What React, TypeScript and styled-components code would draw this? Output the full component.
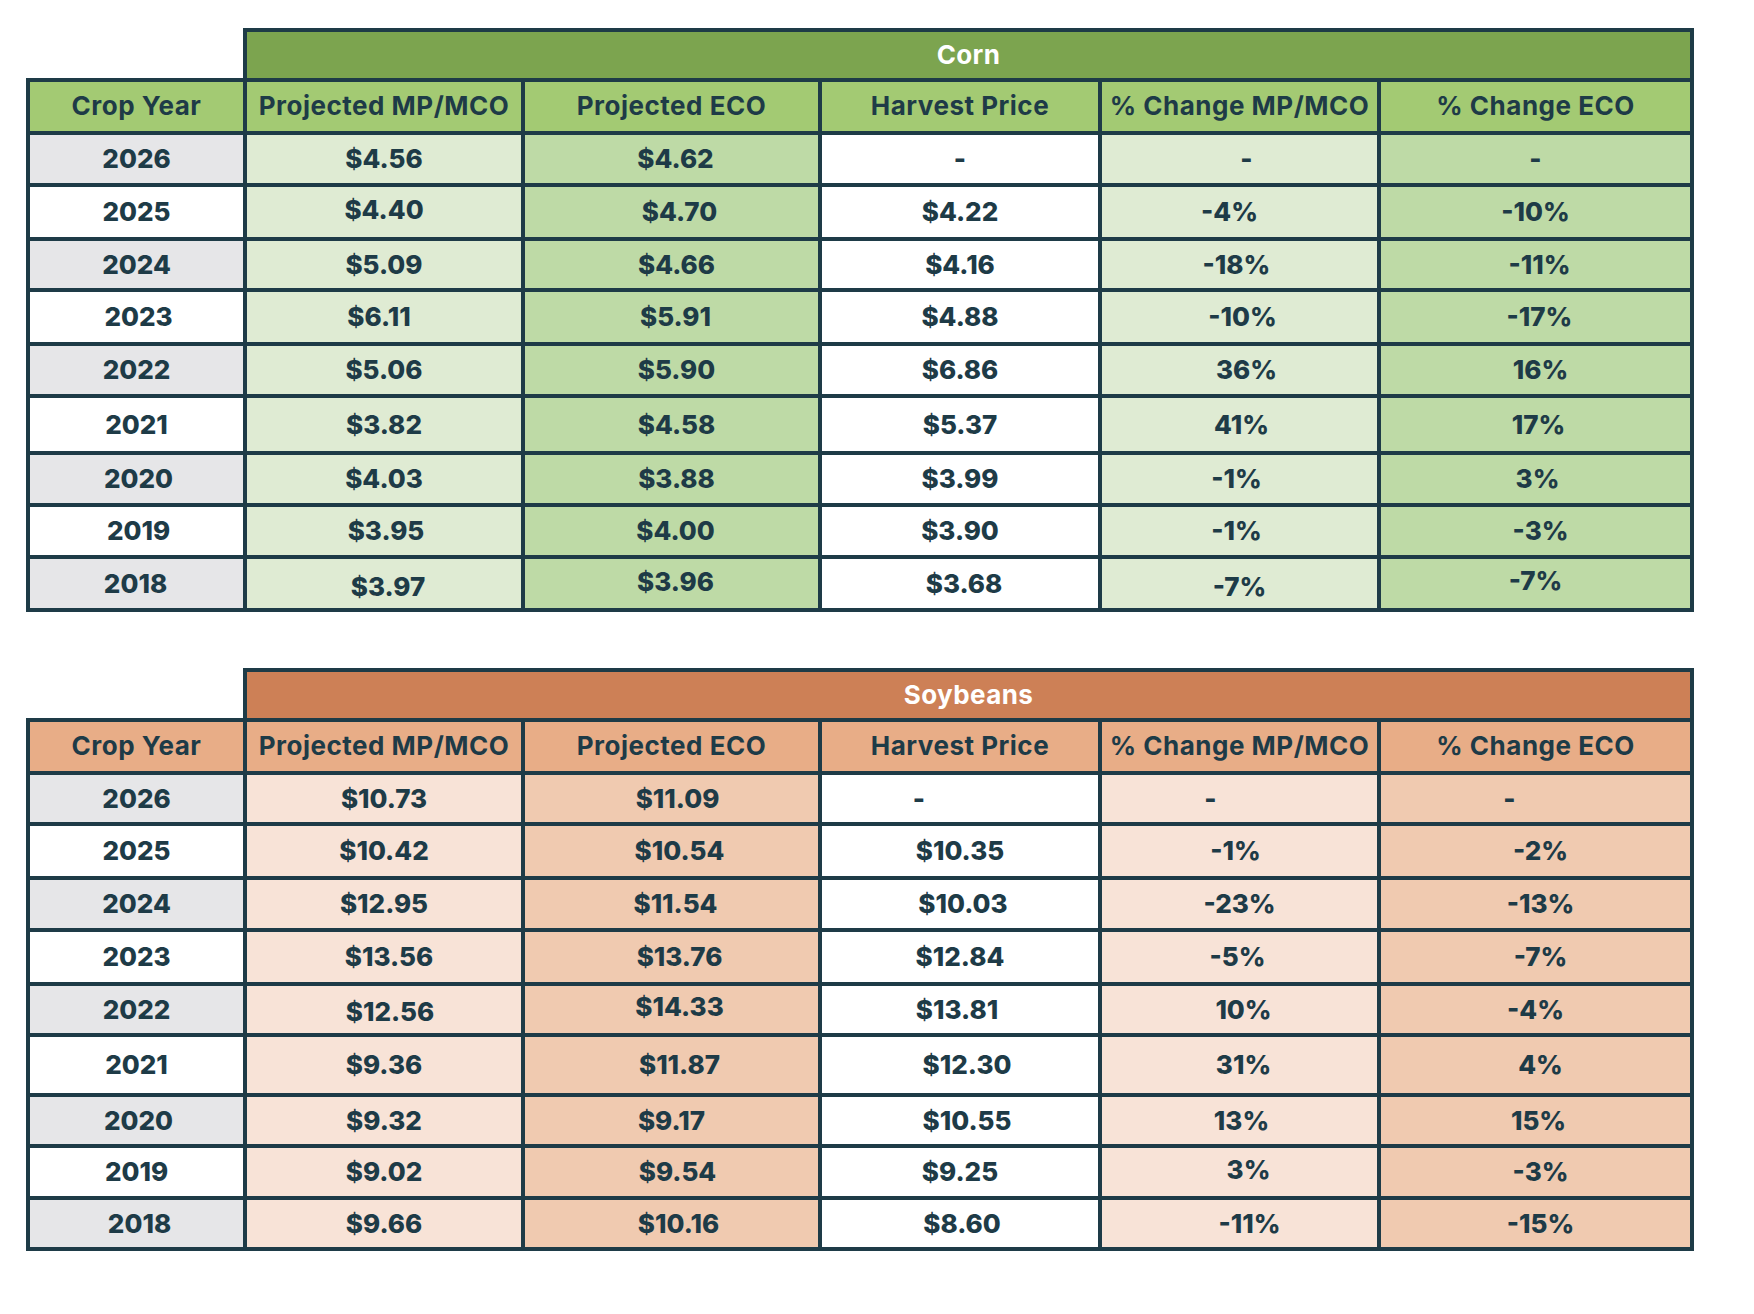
import React from 'react';
import styled, { createGlobalStyle } from 'styled-components';

const GlobalStyle = createGlobalStyle`
  html, body {
    margin: 0;
    padding: 0;
    background: #ffffff;
  }
  body {
    font-family: Inter, Lato, "Open Sans", sans-serif;
    color: #1e3b47;
  }
`;

const INK = '#1e3b47';
const COLS = '213px 274px 293px 276px 275px 309px';

type Palette = {
  band: string;
  head: string;
  light: string;
  mid: string;
};

const corn: Palette = {
  band: '#7ca44f',
  head: '#a3ca73',
  light: '#dfebd3',
  mid: '#bedaa6',
};

const soy: Palette = {
  band: '#cd8056',
  head: '#e8ad87',
  light: '#f8e3d7',
  mid: '#f0cab0',
};

const Page = styled.div`
  padding: 28px 0 0 26px;
  display: flex;
  flex-direction: column;
  gap: 56px;
  width: 1668px;
`;

const Block = styled.section`
  display: flex;
  flex-direction: column;
`;

const BandRow = styled.div`
  display: flex;
  justify-content: flex-end;
`;

const Band = styled.div<{ bg: string }>`
  width: 1443px;
  height: 46px;
  border: 4px solid ${INK};
  border-bottom: none;
  background: ${(p) => p.bg};
  color: #ffffff;
  font-weight: 700;
  font-size: 26px;
  letter-spacing: 0.4px;
  line-height: 1;
  display: flex;
  align-items: center;
  justify-content: center;
  box-sizing: content-box;
`;

const Grid = styled.div<{ rows: string }>`
  display: grid;
  grid-template-columns: ${COLS};
  grid-template-rows: ${(p) => p.rows};
  gap: 4px;
  padding: 4px;
  background: ${INK};
`;

const HeadCell = styled.div<{ bg: string }>`
  background: ${(p) => p.bg};
  display: flex;
  align-items: center;
  justify-content: center;
  font-weight: 700;
  font-size: 26px;
  letter-spacing: 0.5px;
  line-height: 1;
  white-space: nowrap;
  padding-bottom: 2px;
`;

// dx / dy nudge the figure off-centre the way the source sheet does
const Cell = styled.div<{ bg: string; dx?: number; dy?: number }>`
  background: ${(p) => p.bg};
  display: flex;
  align-items: center;
  justify-content: center;
  font-weight: 800;
  font-size: 26px;
  line-height: 1;
  white-space: nowrap;
  padding-left: ${(p) => Math.max(0, (p.dx || 0) * 2)}px;
  padding-right: ${(p) => Math.max(0, -(p.dx || 0) * 2)}px;
  padding-top: ${(p) => Math.max(0, (p.dy || 0) * 2)}px;
  padding-bottom: ${(p) => Math.max(0, -(p.dy || 0) * 2)}px;
`;

type Row = {
  year: string;
  values: string[];
  height: number;
  shift?: Record<number, [number, number]>;
};

type TableProps = {
  title: string;
  palette: Palette;
  rows: Row[];
};

const headers = [
  'Crop Year',
  'Projected MP/MCO',
  'Projected ECO',
  'Harvest Price',
  '% Change MP/MCO',
  '% Change ECO',
];

const CropTable: React.FC<TableProps> = ({ title, palette, rows }) => {
  const colBg = [palette.light, palette.mid, '#ffffff', palette.light, palette.mid];
  const template = ['49px', ...rows.map((r) => `${r.height}px`)].join(' ');
  return (
    <Block>
      <BandRow>
        <Band bg={palette.band}>{title}</Band>
      </BandRow>
      <Grid rows={template}>
        {headers.map((h) => (
          <HeadCell key={h} bg={palette.head}>
            {h}
          </HeadCell>
        ))}
        {rows.map((r, i) => {
          const s = r.shift || {};
          return (
            <React.Fragment key={r.year}>
              <Cell
                bg={i % 2 === 0 ? '#e6e6e8' : '#ffffff'}
                dx={s[0]?.[0]}
                dy={s[0]?.[1]}
              >
                {r.year}
              </Cell>
              {r.values.map((v, j) => (
                <Cell key={j} bg={colBg[j]} dx={s[j + 1]?.[0]} dy={s[j + 1]?.[1]}>
                  {v}
                </Cell>
              ))}
            </React.Fragment>
          );
        })}
      </Grid>
    </Block>
  );
};

const cornRows: Row[] = [
  {
    year: '2026',
    values: ['$4.56', '$4.62', '-', '-', '-'],
    height: 48,
    shift: { 2: [4, 0], 4: [7, 0] },
  },
  {
    year: '2025',
    values: ['$4.40', '$4.70', '$4.22', '-4%', '-10%'],
    height: 50,
    shift: { 1: [0, -2], 2: [8, 0], 4: [-10, 0] },
  },
  {
    year: '2024',
    values: ['$5.09', '$4.66', '$4.16', '-18%', '-11%'],
    height: 47,
    shift: { 2: [5, 0], 4: [-3, 0], 5: [4, 0] },
  },
  {
    year: '2023',
    values: ['$6.11', '$5.91', '$4.88', '-10%', '-17%'],
    height: 50,
    shift: { 0: [2, 0], 1: [-5, 0], 2: [4, 0], 4: [3, 0], 5: [4, 0] },
  },
  {
    year: '2022',
    values: ['$5.06', '$5.90', '$6.86', '36%', '16%'],
    height: 48,
    shift: { 2: [5, 0], 4: [7, 0], 5: [5, 0] },
  },
  {
    year: '2021',
    values: ['$3.82', '$4.58', '$5.37', '41%', '17%'],
    height: 53,
    shift: { 2: [5, 0], 4: [2, 0], 5: [3, 0] },
  },
  {
    year: '2020',
    values: ['$4.03', '$3.88', '$3.99', '-1%', '3%'],
    height: 48,
    shift: { 0: [2, 0], 2: [5, 0], 4: [-3, 0], 5: [2, 0] },
  },
  {
    year: '2019',
    values: ['$3.95', '$4.00', '$3.90', '-1%', '-3%'],
    height: 48,
    shift: { 0: [2, 0], 1: [2, 0], 2: [4, 0], 4: [-3, 0], 5: [5, 0] },
  },
  {
    year: '2018',
    values: ['$3.97', '$3.96', '$3.68', '-7%', '-7%'],
    height: 49,
    shift: { 0: [-1, 0], 1: [4, 3], 2: [4, -2], 3: [4, 0], 4: [0, 3], 5: [0, -3] },
  },
];

const soyRows: Row[] = [
  {
    year: '2026',
    values: ['$10.73', '$11.09', '-', '-', '-'],
    height: 47,
    shift: { 2: [6, 0], 3: [-41, 0], 4: [-29, 0], 5: [-26, 0] },
  },
  {
    year: '2025',
    values: ['$10.42', '$10.54', '$10.35', '-1%', '-2%'],
    height: 50,
    shift: { 2: [8, 0], 4: [-4, 0], 5: [5, 0] },
  },
  {
    year: '2024',
    values: ['$12.95', '$11.54', '$10.03', '-23%', '-13%'],
    height: 48,
    shift: { 2: [4, 0], 3: [3, 0], 5: [5, 0] },
  },
  {
    year: '2023',
    values: ['$13.56', '$13.76', '$12.84', '-5%', '-7%'],
    height: 50,
    shift: { 1: [5, 0], 2: [8, 0], 4: [-2, 0], 5: [5, 0] },
  },
  {
    year: '2022',
    values: ['$12.56', '$14.33', '$13.81', '10%', '-4%'],
    height: 47,
    shift: { 1: [6, 2], 2: [8, -3], 3: [-3, 0], 4: [4, 0] },
  },
  {
    year: '2021',
    values: ['$9.36', '$11.87', '$12.30', '31%', '4%'],
    height: 56,
    shift: { 2: [8, 0], 3: [7, 0], 4: [4, 0], 5: [5, 0] },
  },
  {
    year: '2020',
    values: ['$9.32', '$9.17', '$10.55', '13%', '15%'],
    height: 47,
    shift: { 0: [2, 0], 3: [7, 0], 4: [2, 0], 5: [3, 0] },
  },
  {
    year: '2019',
    values: ['$9.02', '$9.54', '$9.25', '3%', '-3%'],
    height: 48,
    shift: { 2: [6, 0], 4: [9, -2], 5: [5, 0] },
  },
  {
    year: '2018',
    values: ['$9.66', '$10.16', '$8.60', '-11%', '-15%'],
    height: 47,
    shift: { 0: [3, 0], 2: [7, 0], 3: [2, 0], 4: [10, 0], 5: [5, 0] },
  },
];

const App: React.FC = () => {
  return (
    <>
      <GlobalStyle />
      <Page>
        <CropTable title="Corn" palette={corn} rows={cornRows} />
        <CropTable title="Soybeans" palette={soy} rows={soyRows} />
      </Page>
    </>
  );
};

export default App;
